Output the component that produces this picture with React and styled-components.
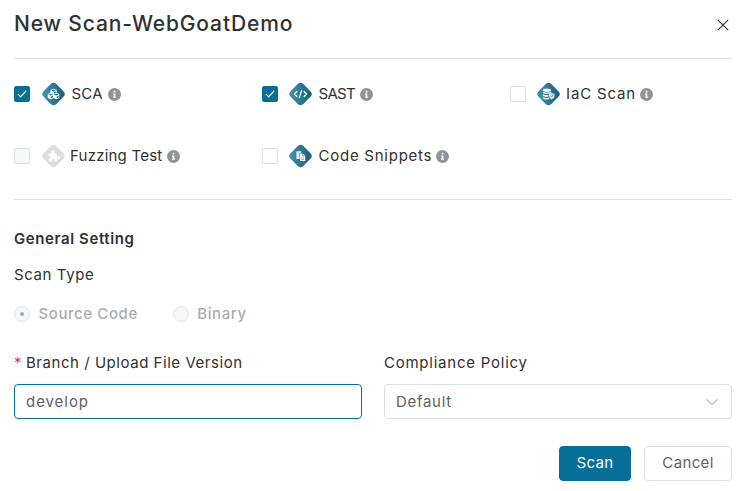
import React from "react";
import styled, { createGlobalStyle, css } from "styled-components";
import { FaCubes } from "react-icons/fa";

const colors = {
  primary: "#056f98",
  text: "#303133",
  muted: "#606266",
  disabled: "#aaabb3",
  border: "#dcdfe6",
  disabledFill: "#f5f7fa",
  info: "#909399",
  danger: "#e0335c",
};

const GlobalStyle = createGlobalStyle`
  * { box-sizing: border-box; }
  body {
    margin: 0;
    background: #fff;
    color: ${colors.text};
    font-family: Inter, "Open Sans", sans-serif;
    font-size: 15px;
    line-height: 20px;
  }
`;

const Dialog = styled.main`
  width: 750px;
  height: 491px;
  padding: 0 18px 0 14px;
  overflow: hidden;
`;

const Header = styled.header`
  display: flex;
  justify-content: space-between;
  height: 59px;
  padding-top: 9px;
  border-bottom: 1px solid ${colors.border};
`;

const Title = styled.h1`
  margin: 0;
  font-size: 21px;
  font-weight: 500;
  line-height: 30px;
  letter-spacing: 0.86px;
`;

const CloseButton = styled.button`
  width: 18px;
  height: 18px;
  margin: 7px 0 0;
  padding: 0;
  border: 0;
  background: none;
  svg { display: block; }
`;

const ScanGrid = styled.section`
  display: grid;
  grid-template-columns: 248px 248px 1fr;
  grid-template-rows: 24px 24px;
  row-gap: 38px;
  height: 141px;
  padding-top: 23px;
  border-bottom: 1px solid ${colors.border};
`;

const ScanOption = styled.label`
  display: flex;
  align-items: center;
`;

const CheckBox = styled.span`
  display: flex;
  align-items: center;
  justify-content: center;
  flex: none;
  width: 16px;
  height: 16px;
  margin-right: ${(p) => p.$gap}px;
  border: 1px solid ${colors.border};
  border-radius: 2px;
  background: #fff;
  ${(p) => p.$checked && css`
    background: ${colors.primary};
    border-color: ${colors.primary};
  `}
  ${(p) => p.$disabled && css`
    background: ${colors.disabledFill};
  `}
`;

const Badge = styled.svg`
  flex: none;
  width: 23px;
  height: 24px;
`;

const OptionName = styled.span`
  flex: none;
  width: ${(p) => p.$width}px;
  margin-left: ${(p) => p.$offset}px;
  white-space: nowrap;
  letter-spacing: ${(p) => p.$tracking}px;
`;

const InfoIcon = styled.svg`
  flex: none;
  width: 13px;
  height: 13px;
  margin-top: 1px;
`;

const SectionTitle = styled.h2`
  margin: 29px 0 0;
  font-size: 15px;
  font-weight: 600;
  line-height: 20px;
  letter-spacing: 0.6px;
`;

const FieldLabel = styled.div`
  white-space: nowrap;
  letter-spacing: ${(p) => p.$tracking}px;
`;

const ScanType = styled.section`
  margin-top: 16px;
`;

const RadioGroup = styled.div`
  display: flex;
  gap: 35px;
  margin-top: 19px;
`;

const RadioOption = styled.label`
  display: flex;
  align-items: center;
  gap: 8.5px;
  color: ${colors.disabled};
  font-weight: 500;
  letter-spacing: 0.58px;
`;

const RadioDot = styled.span`
  display: flex;
  align-items: center;
  justify-content: center;
  width: 16px;
  height: 16px;
  border: 1px solid #e4e7ed;
  border-radius: 50%;
  background: ${colors.disabledFill};
  &::after {
    content: "";
    width: 4px;
    height: 4px;
    border-radius: 50%;
    background: ${(p) => (p.$selected ? "#a3a6ad" : "transparent")};
  }
`;

const Fields = styled.section`
  display: grid;
  grid-template-columns: 348px 348px;
  column-gap: 22px;
  margin-top: 29px;
`;

const Required = styled.span`
  display: inline-block;
  width: 12px;
  color: ${colors.danger};
`;

const Control = styled.div`
  display: flex;
  align-items: center;
  justify-content: space-between;
  height: 35px;
  margin-top: 11px;
  padding: 0 12px 0 11px;
  border: 1px solid ${(p) => (p.$focused ? colors.primary : colors.border)};
  border-radius: 4px;
  color: ${colors.muted};
  letter-spacing: ${(p) => p.$tracking}px;
`;

const Footer = styled.footer`
  display: flex;
  justify-content: flex-end;
  gap: 13px;
  margin-top: 27px;
`;

const Button = styled.button`
  width: ${(p) => (p.$primary ? 72 : 88)}px;
  height: 35px;
  padding: 0 0 1px;
  border: 1px solid ${(p) => (p.$primary ? colors.primary : colors.border)};
  border-radius: 4px;
  background: ${(p) => (p.$primary ? colors.primary : "#fff")};
  color: ${(p) => (p.$primary ? "#fff" : colors.muted)};
  font: inherit;
  letter-spacing: 0.35px;
`;

const glyphs = {
  sca: <FaCubes x="5.500" y="6" size="12" color="#fff" />,
  sast: (
    <path
      d="M7.900 9.500 5.400 12l2.500 2.500M15.100 9.500 17.600 12l-2.500 2.500M12.600 8.400l-2.200 7.200"
      fill="none"
      stroke="#fff"
      strokeWidth="1.300"
      strokeLinecap="round"
      strokeLinejoin="round"
    />
  ),
  iac: (
    <g>
      <g fill="#fff">
        <ellipse cx="10" cy="8.200" rx="4.100" ry="1.600" />
        <path d="M5.900 9.400c1.800 1.300 6.400 1.300 8.200 0v1.500c-2 1.200-6.400 1.200-8.200 0zM5.900 12.200c1.700 1 4 1.100 5.500.8v1.700c-2 .3-4.200.1-5.500-.9zM5.900 14.900c1.500 1 3.700 1.100 5.700.9l1 1.300c-2.400.6-5.500.4-6.700-.9z" />
      </g>
      <path d="m14.800 11 2.700.9v1.800c0 1.800-1.100 3-2.700 3.700-1.600-.7-2.700-1.900-2.700-3.700v-1.800z" fill="#d3e6ed" />
      <path d="m13.600 14 .9.900 1.700-1.900" fill="none" stroke="#28718f" strokeWidth=".8" />
    </g>
  ),
  fuzzing: (
    <path
      d="M6.600 9.600h2.900c.3 0 .4-.3.200-.6a1.700 1.700 0 1 1 2.700 0c-.2.300-.1.600.2.600h2.400v2.300c0 .3.300.4.600.2a1.600 1.600 0 1 1 0 2.500c-.3-.2-.6-.1-.6.2v2.700h-2.600c-.3 0-.4-.3-.2-.6.700-1-.1-1.800-1-1.800s-1.700.8-1 1.800c.2.300.1.600-.2.600H6.600v-2.700c0-.3.300-.4.600-.2.900.6 1.600-.2 1.600-1s-.7-1.600-1.600-1c-.3.200-.6.100-.6-.2z"
      fill="#fff"
    />
  ),
  snippets: (
    <g>
      <path d="M7.400 7.300h4.700v1.800h-1.600v5.800H7.400z" fill="#fff" fillOpacity=".9" />
      <path d="M11 9.600h2.500v2.700h2.700v4.700H11z" fill="#fff" />
      <path d="m14.100 9.600 2.100 2.100h-2.100z" fill="#fff" />
      <path d="M12.200 13.900h2.800M12.200 15.500h2.800" stroke="#4790aa" strokeWidth=".6" />
    </g>
  ),
};

function ScanBadge({ kind, disabled }) {
  const gradientId = `badge-${kind}`;
  return (
    <Badge viewBox="0 0 23 24" aria-hidden="true">
      <defs>
        <linearGradient id={gradientId} x1="0" y1="1" x2="1" y2="0">
          <stop offset="0" stopColor={disabled ? "#dedede" : "#4596b2"} />
          <stop offset="1" stopColor={disabled ? "#dedede" : "#145a76"} />
        </linearGradient>
      </defs>
      <rect
        x="2.500"
        y="3"
        width="18"
        height="18"
        rx="4"
        transform="rotate(45 11.5 12)"
        fill={`url(#${gradientId})`}
      />
      {glyphs[kind]}
    </Badge>
  );
}

function Info() {
  return (
    <InfoIcon viewBox="0 0 13 13" aria-hidden="true">
      <circle cx="6.5" cy="6.5" r="6.5" fill={colors.info} />
      <path d="M5.700 2.800h1.700v1.600H5.700zM5 5.500h2.400v3.300H8v1H5v-1h.7V6.500H5z" fill="#fff" />
    </InfoIcon>
  );
}

const options = [
  { kind: "sca", name: "SCA", checked: true, gap: 12, width: 36.5, offset: 6.5, tracking: 0.2 },
  { kind: "sast", name: "SAST", checked: true, gap: 10.5, width: 41.5, offset: 7, tracking: -0.7 },
  { kind: "iac", name: "IaC Scan", gap: 10.5, width: 74, offset: 6.5, tracking: 0.85 },
  { kind: "fuzzing", name: "Fuzzing Test", disabled: true, gap: 11.5, width: 97, offset: 5.5, tracking: 0.22 },
  { kind: "snippets", name: "Code Snippets", gap: 10.5, width: 117.5, offset: 7, tracking: 0.75 },
];

export default function App() {
  return (
    <Dialog>
      <GlobalStyle />
      <Header>
        <Title>New Scan-WebGoatDemo</Title>
        <CloseButton aria-label="Close">
          <svg width="18" height="18" viewBox="0 0 18 18">
            <path d="m3.800 3.800 10.400 10.400M14.200 3.800 3.800 14.200" stroke="#303133" strokeWidth="1.100" />
          </svg>
        </CloseButton>
      </Header>
      <ScanGrid>
        {options.map((o) => (
          <ScanOption key={o.kind}>
            <CheckBox $checked={o.checked} $disabled={o.disabled} $gap={o.gap}>
              {o.checked && (
                <svg width="12" height="12" viewBox="0 0 12 12">
                  <path d="m1.900 5.900 2.700 2.900 5.500-6" fill="none" stroke="#fff" strokeWidth="1.200" />
                </svg>
              )}
            </CheckBox>
            <ScanBadge kind={o.kind} disabled={o.disabled} />
            <OptionName $width={o.width} $offset={o.offset} $tracking={o.tracking}>{o.name}</OptionName>
            <Info />
          </ScanOption>
        ))}
      </ScanGrid>
      <SectionTitle>General Setting</SectionTitle>
      <ScanType>
        <FieldLabel $tracking={0.6}>Scan Type</FieldLabel>
        <RadioGroup>
          <RadioOption><RadioDot $selected />Source Code</RadioOption>
          <RadioOption><RadioDot />Binary</RadioOption>
        </RadioGroup>
      </ScanType>
      <Fields>
        <div>
          <FieldLabel $tracking={0.54}><Required>*</Required>Branch / Upload File Version</FieldLabel>
          <Control $focused $tracking={0.95}>develop</Control>
        </div>
        <div>
          <FieldLabel $tracking={0.76}>Compliance Policy</FieldLabel>
          <Control $tracking={0.7}>
            Default
            <svg width="14" height="14" viewBox="0 0 14 14">
              <path d="m1.300 4.300 5.700 5.200 5.700-5.200" fill="none" stroke="#b4b7be" strokeWidth="1.100" />
            </svg>
          </Control>
        </div>
      </Fields>
      <Footer>
        <Button $primary>Scan</Button>
        <Button>Cancel</Button>
      </Footer>
    </Dialog>
  );
}
